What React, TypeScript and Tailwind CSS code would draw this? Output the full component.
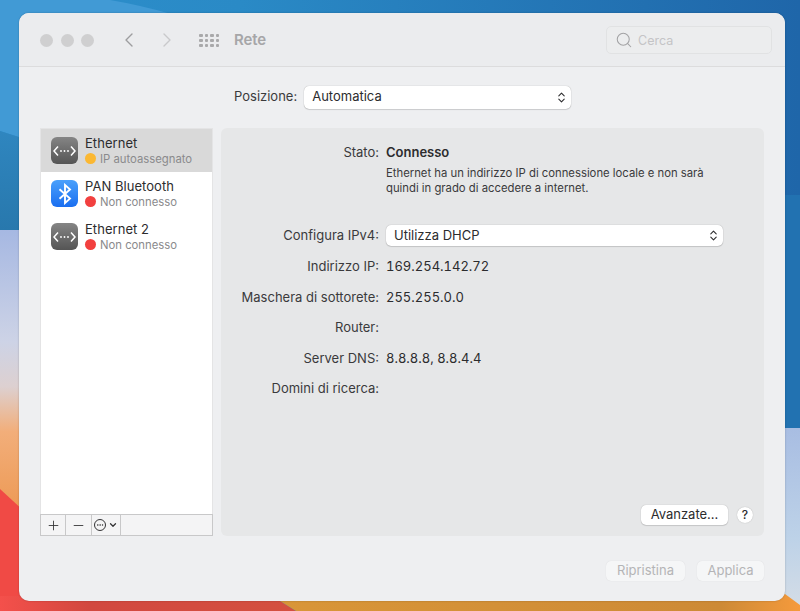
import { ChevronLeft, ChevronRight, ChevronDown, ChevronsUpDown, Search, Plus, Minus, Ellipsis } from 'lucide-react';

const font = 'font-["Inter","Liberation_Sans",sans-serif]';

const services = [
  { name: 'Ethernet', status: 'IP autoassegnato', dot: 'bg-[#fbb833]', kind: 'eth', selected: true },
  { name: 'PAN Bluetooth', status: 'Non connesso', dot: 'bg-[#f2403f]', kind: 'bt', selected: false },
  { name: 'Ethernet 2', status: 'Non connesso', dot: 'bg-[#f2403f]', kind: 'eth', selected: false },
];

const rows = [
  { label: 'Indirizzo IP:', value: '169.254.142.72' },
  { label: 'Maschera di sottorete:', value: '255.255.0.0' },
  { label: 'Router:', value: '' },
  { label: 'Server DNS:', value: '8.8.8.8, 8.8.4.4' },
  { label: 'Domini di ricerca:', value: '' },
];

function Wallpaper() {
  return (
    <svg className="absolute inset-0 h-full w-full" viewBox="0 0 800 611" preserveAspectRatio="none">
      <defs>
        <linearGradient id="sky" x1="0" y1="0" x2="1" y2="0">
          <stop offset="0" stopColor="#2c8ecb" />
          <stop offset="0.3" stopColor="#2a8ac6" />
          <stop offset="1" stopColor="#1f66a9" />
        </linearGradient>
        <linearGradient id="left" x1="0" y1="0" x2="0" y2="1">
          <stop offset="0" stopColor="#a6b8e2" />
          <stop offset="0.4" stopColor="#cdd3e6" />
          <stop offset="0.56" stopColor="#ddd0d0" />
          <stop offset="0.72" stopColor="#f2ae7a" />
          <stop offset="1" stopColor="#ed9a55" />
        </linearGradient>
        <linearGradient id="shoulder" x1="0" y1="0" x2="0" y2="1">
          <stop offset="0" stopColor="#2f86bf" />
          <stop offset="1" stopColor="#2878ad" />
        </linearGradient>
        <linearGradient id="right" x1="0" y1="0" x2="0" y2="1">
          <stop offset="0" stopColor="#a8bde2" />
          <stop offset="0.6" stopColor="#bdd2e8" />
          <stop offset="1" stopColor="#d5dde6" />
        </linearGradient>
        <linearGradient id="red" x1="0" y1="0" x2="1" y2="0">
          <stop offset="0" stopColor="#f4504b" />
          <stop offset="0.3" stopColor="#d2483f" />
          <stop offset="1" stopColor="#d4503f" />
        </linearGradient>
        <linearGradient id="orange" x1="0" y1="0" x2="1" y2="0">
          <stop offset="0" stopColor="#d99638" />
          <stop offset="0.85" stopColor="#cd8a36" />
          <stop offset="1" stopColor="#f59a3c" />
        </linearGradient>
      </defs>
      <rect x="0" y="0" width="800" height="611" fill="url(#sky)" />
      {/* lato sinistro */}
      <path d="M0 0H110Q140 5 175 15H25V139L0 131Z" fill="#419ad5" />
      <path d="M0 131L25 139V230H0Z" fill="url(#shoulder)" />
      <rect x="0" y="230" width="25" height="280" fill="url(#left)" />
      <path d="M0 489L25 512V611H0Z" fill="#f04a45" />
      {/* lato destro */}
      <rect x="780" y="195" width="20" height="233" fill="#2272b1" />
      <rect x="780" y="428" width="20" height="183" fill="url(#right)" />
      {/* in basso */}
      <path d="M0 596H272L296 611H0Z" fill="url(#red)" />
      <path d="M272 596H770L785 594L800 605V611H296Z" fill="url(#orange)" />
    </svg>
  );
}

function ServiceIcon({ kind }: { kind: string }) {
  if (kind === 'bt') {
    return (
      <div className="flex h-[27px] w-[27px] items-center justify-center rounded-[6px] bg-gradient-to-b from-[#4aa0fb] to-[#1a6ef0]">
        <svg width="14" height="22" viewBox="0 0 14 22" fill="none" stroke="#fff" strokeWidth="1.9" strokeLinejoin="miter">
          <path d="M1.5 6.2L12 15.6L7 20V2L12 6.4L1.5 15.8" />
        </svg>
      </div>
    );
  }
  return (
    <div className="flex h-[27px] w-[27px] items-center justify-center rounded-[6px] bg-gradient-to-b from-[#858585] to-[#555555]">
      <svg width="23" height="12" viewBox="0 0 23 12" fill="none" stroke="#fff" strokeWidth="1.5">
        <path d="M5 1.5L1 6L5 10.5" />
        <path d="M18 1.5L22 6L18 10.5" />
        <circle cx="8" cy="6" r="0.9" fill="#fff" stroke="none" />
        <circle cx="11.5" cy="6" r="0.9" fill="#fff" stroke="none" />
        <circle cx="15" cy="6" r="0.9" fill="#fff" stroke="none" />
      </svg>
    </div>
  );
}

function AppGrid() {
  return (
    <div className="grid grid-cols-4 gap-x-[2px] gap-y-[2px]">
      {Array.from({ length: 12 }).map((_, i) => (
        <div key={i} className="h-[3px] w-[3.5px] rounded-[1px] bg-[#a9a9aa]" />
      ))}
    </div>
  );
}

export default function App() {
  return (
    <div className={`relative h-[611px] w-[800px] overflow-hidden pl-[19px] pt-[13px] ${font}`}>
      <Wallpaper />
      <div className="relative flex h-[588px] w-[766px] flex-col overflow-hidden rounded-[10px] bg-[#eeeff1] shadow-[0_0_2px_rgba(0,0,0,0.25)]">
        {/* barra del titolo */}
        <div className="flex h-[54px] shrink-0 items-center border-b border-[#dcdcdd] bg-[#ebecee] pl-[21px] pr-[13px]">
          <div className="mt-[1px] flex gap-[7.5px]">
            <div className="h-[13px] w-[13px] rounded-full bg-[#cfcfd0]" />
            <div className="h-[13px] w-[13px] rounded-full bg-[#cfcfd0]" />
            <div className="h-[13px] w-[13px] rounded-full bg-[#cfcfd0]" />
          </div>
          <ChevronLeft className="ml-[23px] text-[#9d9d9f]" size={24} strokeWidth={1.4} />
          <ChevronRight className="ml-[14px] text-[#c9c9cb]" size={24} strokeWidth={1.4} />
          <div className="ml-[20px] mt-[1px]"><AppGrid /></div>
          <span className="ml-[15px] mt-[1px] text-[15px] font-semibold tracking-[-0.1px] text-[#a6a6a8]">Rete</span>
          <div className="ml-auto mt-[1px] flex h-[28px] w-[166px] items-center rounded-[5px] border border-[#e1e2e3] bg-[#ecedee] pl-[8px]">
            <Search className="text-[#a3a3a5]" size={18} strokeWidth={1.4} />
            <span className="ml-[5px] mt-[2px] text-[12.5px] text-[#c4c4c6]">Cerca</span>
          </div>
        </div>

        <div className="flex flex-1 flex-col px-[21px]">
          {/* posizione */}
          <div className="mt-[18px] flex h-[24px] items-center">
            <span className="ml-[194px] text-[13px] text-[#3a3a3c]">Posizione:</span>
            <div className="ml-[7px] flex h-[23px] w-[267px] items-center justify-between rounded-[5px] bg-white pl-[8px] pr-[3px] text-[13px] text-[#2c2c2e] shadow-[0_0_1px_rgba(0,0,0,0.35),0_1px_1px_rgba(0,0,0,0.12)]">
              Automatica
              <ChevronsUpDown size={13} strokeWidth={2} />
            </div>
          </div>

          <div className="mt-[19px] flex h-[408px] gap-[8px]">
            {/* elenco servizi */}
            <div className="flex w-[173px] flex-col">
              <div className="flex-1 border-x border-t border-[#e4e4e5] bg-white">
                {services.map((s) => (
                  <div key={s.name} className={`flex h-[43px] items-center pl-[10px] ${s.selected ? 'bg-[#d9d9d9]' : ''}`}>
                    <ServiceIcon kind={s.kind} />
                    <div className="ml-[7px] flex flex-col">
                      <span className="text-[13px] leading-[15px] tracking-[0.05px] text-[#2c2c2e]">{s.name}</span>
                      <div className="mt-[1px] flex items-center">
                        <div className={`h-[10.5px] w-[10.5px] rounded-full ${s.dot}`} />
                        <span className="ml-[4.5px] text-[11.3px] leading-[14px] text-[#8a8a8c]">{s.status}</span>
                      </div>
                    </div>
                  </div>
                ))}
              </div>
              <div className="flex h-[22px] border border-[#c8c8c9] bg-[#f4f4f5] text-[#333335]">
                <div className="flex w-[25px] items-center justify-center border-r border-[#c8c8c9]"><Plus size={15} strokeWidth={1.4} /></div>
                <div className="flex w-[26px] items-center justify-center border-r border-[#c8c8c9]"><Minus size={15} strokeWidth={1.4} /></div>
                <div className="flex w-[29px] items-center justify-center gap-[2px] border-r border-[#c8c8c9]">
                  <div className="flex h-[12px] w-[12px] items-center justify-center rounded-full border border-[#333335]"><Ellipsis size={8} strokeWidth={2} /></div>
                  <ChevronDown size={10} strokeWidth={3} />
                </div>
              </div>
            </div>

            {/* pannello */}
            <div className="flex flex-1 flex-col rounded-[6px] bg-[#e6e7e8] pb-[11px] pr-[11px]">
              <div className="mt-[15px] grid grid-cols-[158px_1fr] gap-x-[7px] text-[13px] text-[#2c2c2e]">
                <span className="text-right leading-[18px] text-[#3a3a3c]">Stato:</span>
                <span className="font-semibold leading-[18px]">Connesso</span>
                <span />
                <p className="mt-[5px] w-[345px] text-[11.3px] leading-[15px] text-[#3a3a3c]">
                  Ethernet ha un indirizzo IP di connessione locale e non sarà quindi in grado di accedere a internet.
                </p>
                <span className="mt-[29px] self-center text-right text-[#3a3a3c]">Configura IPv4:</span>
                <div className="mt-[29px] flex h-[21px] w-[337px] items-center justify-between rounded-[5px] bg-white pl-[8px] pr-[3px] shadow-[0_0_1px_rgba(0,0,0,0.35),0_1px_1px_rgba(0,0,0,0.12)]">
                  Utilizza DHCP
                  <ChevronsUpDown size={13} strokeWidth={2} />
                </div>
              </div>
              <div className="mt-[11px] grid grid-cols-[158px_1fr] gap-x-[7px] gap-y-[12.6px] text-[13px] leading-[18px] text-[#2c2c2e]">
                {rows.map((r) => [
                  <span key={r.label} className="text-right text-[#3a3a3c]">{r.label}</span>,
                  <span key={r.label + 'v'} className="tabular-nums">{r.value || '\u00a0'}</span>,
                ])}
              </div>
              <div className="mt-auto flex items-center justify-end gap-[9px]">
                <div className="flex h-[20px] w-[87px] items-center justify-center rounded-[5px] bg-white text-[13px] text-[#2c2c2e] shadow-[0_0_1px_rgba(0,0,0,0.3),0_1px_1px_rgba(0,0,0,0.12)]">Avanzate...</div>
                <div className="flex h-[16px] w-[16px] items-center justify-center rounded-full bg-white text-[12px] font-medium text-[#2c2c2e] shadow-[0_0_1px_rgba(0,0,0,0.3)]">?</div>
              </div>
            </div>
          </div>

          {/* pulsanti in basso */}
          <div className="mt-[25px] flex justify-end gap-[12px]">
            <div className="flex h-[20px] w-[79px] items-center justify-center rounded-[5px] bg-[#f5f6f7] text-[13px] text-[#b4b4b6] shadow-[0_0_1px_rgba(0,0,0,0.12)]">Ripristina</div>
            <div className="flex h-[20px] w-[67px] items-center justify-center rounded-[5px] bg-[#f5f6f7] text-[13px] text-[#b4b4b6] shadow-[0_0_1px_rgba(0,0,0,0.12)]">Applica</div>
          </div>
        </div>
      </div>
    </div>
  );
}
